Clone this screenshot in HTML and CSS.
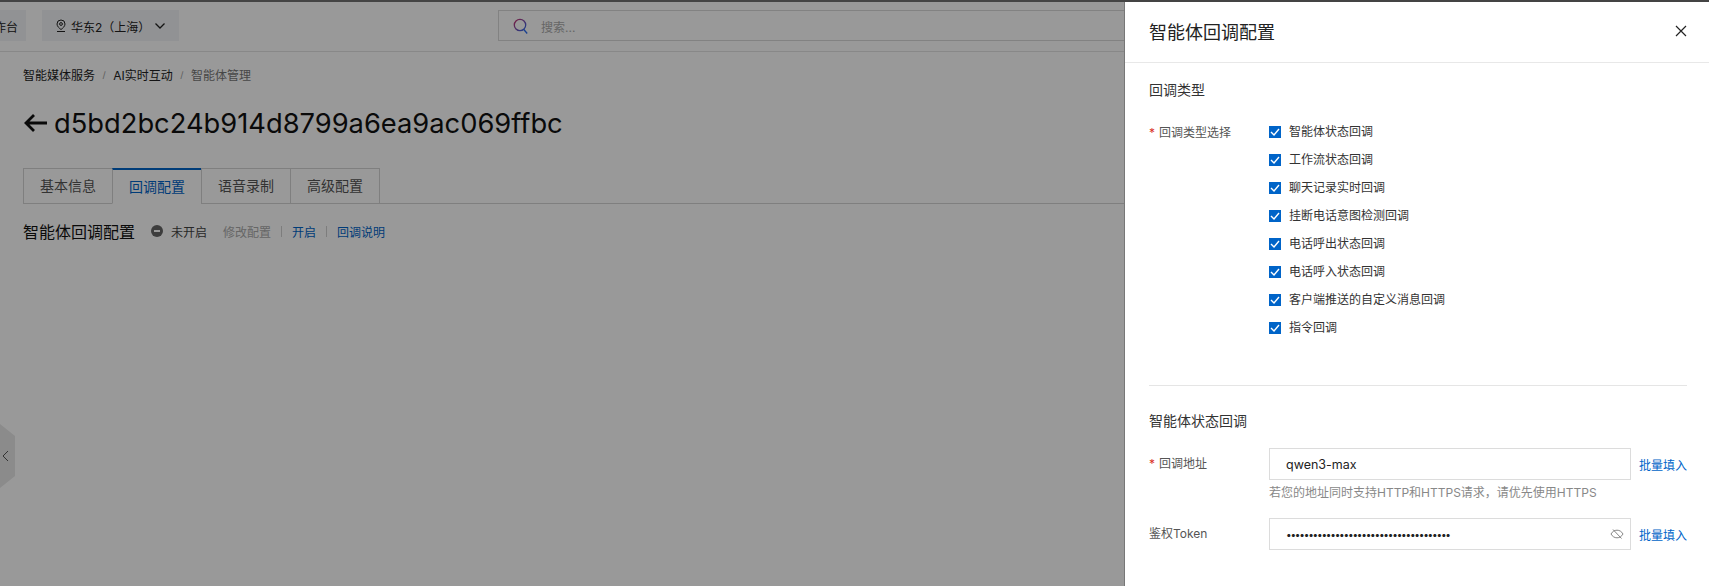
FILE: index.html
```html
<!DOCTYPE html>
<html lang="zh-CN">
<head>
    <meta charset="UTF-8">
    <meta name="viewport" content="width=device-width, initial-scale=1.0">
    <title>智能体回调配置</title>
    <link rel="stylesheet" href="styles.css">
</head>
<body>
    <div class="top-strip"></div>

    <header class="topbar">
        <div class="top-btn console-btn">工作台</div>
        <div class="top-btn region-btn">
            <svg class="pin-icon" width="12" height="14" viewBox="0 0 12 14" fill="none" stroke="#222" stroke-width="1">
                <path d="M6 1a4 4 0 0 1 4 4c0 2.400-2.500 4.500-4 5.500C4.500 9.500 2 7.400 2 5a4 4 0 0 1 4-4z"/>
                <circle cx="6" cy="5" r="1.400"/>
                <path d="M2 12.500h8"/>
            </svg>
            <span>华东2（上海）</span>
            <svg class="chev-icon" width="12" height="8" viewBox="0 0 12 8" fill="none" stroke="#222" stroke-width="1.300">
                <path d="M1.500 1.500L6 6l4.500-4.500"/>
            </svg>
        </div>
        <div class="search-box">
            <svg width="16" height="17" viewBox="0 0 16 17" fill="none" stroke-width="1.300">
                <defs>
                    <linearGradient id="search-grad" x1="0" y1="0" x2="1" y2="1">
                        <stop offset="0" stop-color="#d0306a"/>
                        <stop offset="1" stop-color="#2a6cf0"/>
                    </linearGradient>
                </defs>
                <circle cx="7" cy="7" r="5.700" stroke="url(#search-grad)"/>
                <path d="M10.800 11.500l3.400 4" stroke="#2a6cf0"/>
            </svg>
            <span class="search-text">搜索...</span>
        </div>
    </header>

    <main class="page">
        <nav class="crumbs">
            <span>智能媒体服务</span>
            <i>/</i>
            <span>AI实时互动</span>
            <i>/</i>
            <span class="crumb-now">智能体管理</span>
        </nav>

        <div class="page-title">
            <svg width="24" height="20" viewBox="0 0 24 20" fill="none" stroke="#111" stroke-width="2.800">
                <path d="M24 10H3M11 2l-8 8 8 8"/>
            </svg>
            <h1>d5bd2bc24b914d8799a6ea9ac069ffbc</h1>
        </div>

        <div class="tabs">
            <div class="tab">基本信息</div>
            <div class="tab tab-active">回调配置</div>
            <div class="tab">语音录制</div>
            <div class="tab">高级配置</div>
        </div>

        <div class="config-head">
            <h2>智能体回调配置</h2>
            <span class="status">
                <span class="status-dot"></span>
                未开启
            </span>
            <span class="action-off">修改配置</span>
            <span class="sep"></span>
            <a class="action">开启</a>
            <span class="sep"></span>
            <a class="action">回调说明</a>
        </div>
    </main>

    <div class="side-handle">
        <svg width="7" height="12" viewBox="0 0 7 12" fill="none" stroke="#555" stroke-width="1">
            <path d="M6 1L1 6l5 5"/>
        </svg>
    </div>

    <div class="overlay"></div>

    <aside class="drawer">
        <div class="drawer-head">
            <h3>智能体回调配置</h3>
            <svg width="12" height="12" viewBox="0 0 12 12" fill="none" stroke="#222" stroke-width="1.200">
                <path d="M1 1l10 10M11 1L1 11"/>
            </svg>
        </div>

        <div class="drawer-body">
            <h4 class="section-title">回调类型</h4>
            <div class="form-row type-row">
                <div class="form-label"><b>*</b>回调类型选择</div>
                <div class="check-list">
                    <label class="check-item"><span class="check-box"><svg width="10" height="8" viewBox="0 0 10 8" fill="none" stroke="#fff" stroke-width="1.400"><path d="M1 4l3 3 5-6"/></svg></span>智能体状态回调</label>
                    <label class="check-item"><span class="check-box"><svg width="10" height="8" viewBox="0 0 10 8" fill="none" stroke="#fff" stroke-width="1.400"><path d="M1 4l3 3 5-6"/></svg></span>工作流状态回调</label>
                    <label class="check-item"><span class="check-box"><svg width="10" height="8" viewBox="0 0 10 8" fill="none" stroke="#fff" stroke-width="1.400"><path d="M1 4l3 3 5-6"/></svg></span>聊天记录实时回调</label>
                    <label class="check-item"><span class="check-box"><svg width="10" height="8" viewBox="0 0 10 8" fill="none" stroke="#fff" stroke-width="1.400"><path d="M1 4l3 3 5-6"/></svg></span>挂断电话意图检测回调</label>
                    <label class="check-item"><span class="check-box"><svg width="10" height="8" viewBox="0 0 10 8" fill="none" stroke="#fff" stroke-width="1.400"><path d="M1 4l3 3 5-6"/></svg></span>电话呼出状态回调</label>
                    <label class="check-item"><span class="check-box"><svg width="10" height="8" viewBox="0 0 10 8" fill="none" stroke="#fff" stroke-width="1.400"><path d="M1 4l3 3 5-6"/></svg></span>电话呼入状态回调</label>
                    <label class="check-item"><span class="check-box"><svg width="10" height="8" viewBox="0 0 10 8" fill="none" stroke="#fff" stroke-width="1.400"><path d="M1 4l3 3 5-6"/></svg></span>客户端推送的自定义消息回调</label>
                    <label class="check-item"><span class="check-box"><svg width="10" height="8" viewBox="0 0 10 8" fill="none" stroke="#fff" stroke-width="1.400"><path d="M1 4l3 3 5-6"/></svg></span>指令回调</label>
                </div>
            </div>

            <div class="divider"></div>

            <h4 class="section-title">智能体状态回调</h4>
            <div class="form-row input-row">
                <div class="form-label"><b>*</b>回调地址</div>
                <div class="input-box">qwen3-max</div>
                <a class="fill-link">批量填入</a>
            </div>
            <div class="hint">若您的地址同时支持HTTP和HTTPS请求，请优先使用HTTPS</div>
            <div class="form-row input-row">
                <div class="form-label">鉴权Token</div>
                <div class="input-box password">
                    <span>•••••••••••••••••••••••••••••••••••••</span>
                    <svg width="14" height="12" viewBox="0 0 14 12" fill="none" stroke="#777" stroke-width="0.900">
                        <path d="M1 6c1.500-2.600 3.500-3.800 6-3.800S11.500 3.400 13 6c-1.500 2.600-3.500 3.800-6 3.800S2.500 8.600 1 6z"/>
                        <path d="M3 1.500l8.500 9"/>
                    </svg>
                </div>
                <a class="fill-link">批量填入</a>
            </div>
        </div>
    </aside>
</body>
</html>
```

FILE: styles.css
```css
* {
    box-sizing: border-box;
}
html, body {
    height: 100%;
}
body {
    margin: 0;
    overflow: hidden;
    background-color: #fff;
    color: #333;
    font-family: Inter, "Noto Sans CJK SC", sans-serif;
    font-size: 12px;
}
h1, h2, h3, h4 {
    margin: 0;
    font-weight: 400;
}

.top-strip {
    position: relative;
    z-index: 3;
    height: 2px;
    background-color: #444;
}
.topbar {
    display: flex;
    align-items: center;
    gap: 16px;
    height: 50px;
    padding-bottom: 3px;
    border-bottom: 1px solid #e3e3e3;
}
.top-btn {
    display: flex;
    align-items: center;
    height: 31px;
    padding-top: 2px;
    background-color: #f2f4f7;
    font-size: 12px;
    color: #222;
    white-space: nowrap;
}
.console-btn {
    width: 26px;
    justify-content: flex-end;
    padding-right: 8px;
    overflow: hidden;
}
.region-btn {
    width: 137px;
    padding-left: 13px;
    margin-right: 303px;
}
.pin-icon {
    margin-right: 4px;
}
.chev-icon {
    margin-left: 4px;
}
.search-box {
    flex: 1;
    display: flex;
    align-items: center;
    height: 31px;
    padding-top: 2px;
    padding-left: 14px;
    border: 1px solid #d9d9d9;
}
.search-text {
    margin-left: 12px;
    color: #aaa;
    font-size: 12px;
}

.page {
    padding: 0 23px;
}
.crumbs {
    display: flex;
    align-items: center;
    height: 20px;
    margin-top: 12px;
    font-size: 12px;
    color: #222;
}
.crumbs i {
    margin: 0 7.500px;
    font-style: normal;
    font-size: 9px;
    color: #999;
}
.crumb-now {
    color: #777;
}
.page-title {
    display: flex;
    align-items: center;
    gap: 7px;
    height: 40px;
    margin-top: 19px;
}
.page-title h1 {
    font-size: 27.300px;
    color: #111;
}
.tabs {
    display: flex;
    height: 36px;
    margin-top: 25px;
    border-bottom: 1px solid #d4d4d4;
}
.tab {
    width: 90px;
    height: 36px;
    margin-right: -1px;
    border: 1px solid #d4d4d4;
    text-align: center;
    line-height: 34px;
    font-size: 14px;
    color: #555;
}
.tab-active {
    border-top: 2px solid #0064c8;
    border-bottom-color: #fff;
    line-height: 33px;
    color: #0064c8;
}
.config-head {
    display: flex;
    align-items: center;
    height: 24px;
    margin-top: 15px;
    font-size: 12px;
}
.config-head h2 {
    margin-right: 16px;
    font-size: 16px;
    color: #111;
}
.status {
    display: flex;
    align-items: center;
    gap: 8px;
    margin-right: 16px;
    color: #444;
}
.status-dot {
    position: relative;
    width: 12px;
    height: 12px;
    border-radius: 50%;
    background-color: #666;
}
.status-dot::after {
    content: "";
    position: absolute;
    left: 3px;
    right: 3px;
    top: 5px;
    height: 2px;
    background-color: #fff;
}
.action-off {
    color: #aaa;
}
.sep {
    width: 1px;
    height: 11px;
    margin: 0 10px;
    background-color: #d0d0d0;
}
.action {
    color: #0064c8;
}

.side-handle {
    position: absolute;
    left: 0;
    top: 424px;
    width: 15px;
    height: 64px;
    display: flex;
    align-items: center;
    padding-left: 2px;
    background-color: #e8e8e8;
    clip-path: polygon(0 0, 100% 12px, 100% 52px, 0 100%);
}

.overlay {
    position: fixed;
    inset: 0;
    background-color: rgba(0, 0, 0, 0.4);
}

.drawer {
    position: fixed;
    top: 2px;
    right: 0;
    bottom: 0;
    width: 585px;
    background-color: #fff;
    border-left: 1px solid #777;
}
.drawer-head {
    display: flex;
    align-items: center;
    justify-content: space-between;
    height: 61px;
    padding: 0 22px 2px 24px;
    border-bottom: 1px solid #e8e8e8;
}
.drawer-head h3 {
    font-size: 18px;
    color: #222;
}
.drawer-body {
    padding: 0 22px 0 24px;
}
.section-title {
    height: 20px;
    font-size: 14px;
    line-height: 20px;
    color: #333;
}
.drawer-body > .section-title:first-child {
    margin-top: 17px;
}
.form-row {
    display: flex;
}
.type-row {
    margin-top: 23px;
}
.form-label {
    width: 120px;
    flex-shrink: 0;
    font-size: 12px;
    line-height: 20px;
    color: #555;
}
.form-label b {
    display: inline-block;
    width: 10px;
    font-weight: 400;
    color: #d93026;
}
.check-list {
    display: flex;
    flex-direction: column;
    gap: 10px;
}
.check-item {
    display: flex;
    align-items: flex-start;
    height: 18px;
    font-size: 12px;
    line-height: 17px;
    color: #333;
}
.check-box {
    display: flex;
    align-items: center;
    justify-content: center;
    width: 12px;
    height: 12px;
    margin-top: 3px;
    margin-right: 8px;
    background-color: #0064c8;
}
.divider {
    height: 1px;
    margin: 48px 0 25px;
    background-color: #e5e5e5;
}
.input-row {
    align-items: center;
    margin-top: 17px;
}
.input-row + .hint {
    margin-top: 5px;
}
.input-box {
    display: flex;
    align-items: center;
    justify-content: space-between;
    width: 362px;
    height: 32px;
    padding: 0 6px 0 16px;
    border: 1px solid #dcdcdc;
    font-size: 12.500px;
    color: #222;
}
.password span {
    font-size: 10px;
    letter-spacing: -1.200px;
}
.fill-link {
    margin-left: 8px;
    font-size: 12px;
    color: #0064c8;
}
.hint {
    margin-left: 120px;
    font-size: 12px;
    line-height: 16px;
    color: #888;
}
```
